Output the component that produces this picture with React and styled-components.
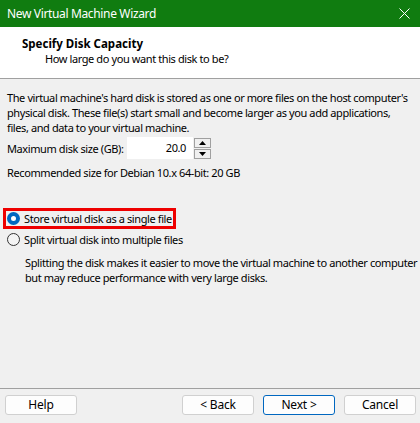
import React from 'react'
import styled, { createGlobalStyle } from 'styled-components'

const GlobalStyle = createGlobalStyle`
    body {
        margin: 0;
        font-family: "Noto Sans", "Liberation Sans", sans-serif;
        font-size: 11px;
        letter-spacing: -0.4px;
        color: #000;
    }
`

const Window = styled.div`
    display: flex;
    flex-direction: column;
    width: 420px;
    height: 423px;
    background: #f0f0f0;
    overflow: hidden;
`
const TitleBar = styled.div`
    display: flex;
    justify-content: space-between;
    align-items: center;
    height: 27px;
    padding: 0 10px 0 7px;
    background: #107c10;
    color: #fff;
    font-size: 12px;
    letter-spacing: -0.35px;
`
const Header = styled.div`
    display: flex;
    flex-direction: column;
    height: 52px;
    padding: 9px 0 0 22px;
    box-sizing: border-box;
    background: #fff;
    border-bottom: 1px solid #a0a0a0;
    line-height: 15px;
`
const HeaderTitle = styled.div`
    font-weight: 700;
    font-size: 11.5px;
    letter-spacing: 0;
`
const HeaderSub = styled.div`
    padding-left: 23px;
`
const Body = styled.div`
    flex: 1;
    display: flex;
    flex-direction: column;
    padding: 11px 7px 0 7px;
    line-height: 15px;
`
const Paragraph = styled.p`
    margin: 0;
    white-space: nowrap;
    padding-left: ${p => p.$indent || 0}px;
    margin-top: ${p => p.$top || 0}px;
`
const SizeRow = styled.div`
    display: flex;
    align-items: center;
    margin-top: 2px;
    height: 22px;
    white-space: nowrap;
`
const SizeLabel = styled.span`
    width: 120px;
`
const NumberBox = styled.div`
    width: 66px;
    height: 22px;
    box-sizing: border-box;
    background: #fff;
    text-align: right;
    padding-right: 7px;
    line-height: 22px;
`
const Spinner = styled.div`
    display: flex;
    flex-direction: column;
    gap: 1px;
    margin-left: 1px;
`
const SpinButton = styled.div`
    display: flex;
    align-items: center;
    justify-content: center;
    width: 15px;
    height: 8px;
    border: 1px solid #a0a0a0;
    background: #f0f0f0;
`
const Options = styled.div`
    display: flex;
    flex-direction: column;
    align-items: flex-start;
    margin-top: 28px;
`
const RadioRow = styled.label`
    display: flex;
    align-items: center;
    gap: 4px;
    height: 15px;
    padding: 0 1px 0 1px;
    margin-left: -4px;
    white-space: nowrap;
    border: 3px solid ${p => (p.$highlight ? '#ee0000' : 'transparent')};
`
const RadioDot = styled.span`
    width: 13px;
    height: 13px;
    box-sizing: border-box;
    border-radius: 50%;
    border: ${p => (p.$checked ? '4px solid #0067c0' : '1px solid #333')};
    background: ${p => (p.$checked ? '#fff' : '#f4f4f4')};
`
const Footer = styled.div`
    display: flex;
    align-items: center;
    height: 31px;
    padding: 0 4px 3px 5px;
    border-top: 1px solid #a0a0a0;
`
const Button = styled.div`
    display: flex;
    align-items: center;
    justify-content: center;
    width: 72px;
    height: 20px;
    box-sizing: border-box;
    margin-left: ${p => p.$gap || 0}px;
    background: #fdfdfd;
    border: 1px solid ${p => (p.$primary ? '#0067c0' : '#d0d0d0')};
    border-radius: 3px;
    font-size: 12px;
    letter-spacing: -0.2px;
`

const CloseIcon = () => (
    <svg width="11" height="11" viewBox="0 0 11 11">
        <path d="M0.5 0.5 L10.5 10.5 M10.5 0.5 L0.5 10.5" stroke="#fff" strokeWidth="1" />
    </svg>
)

const Arrow = ({ down }) => (
    <svg width="7" height="4" viewBox="0 0 7 4">
        <path d={down ? 'M0 0 H7 L3.5 4 Z' : 'M0 4 H7 L3.5 0 Z'} fill="#000" />
    </svg>
)

const App = () => {
    return (
        <Window>
            <GlobalStyle />
            <TitleBar>
                <span>New Virtual Machine Wizard</span>
                <CloseIcon />
            </TitleBar>
            <Header>
                <HeaderTitle>Specify Disk Capacity</HeaderTitle>
                <HeaderSub>How large do you want this disk to be?</HeaderSub>
            </Header>
            <Body>
                <Paragraph>
                    The virtual machine's hard disk is stored as one or more files on the host computer's<br />
                    physical disk. These file(s) start small and become larger as you add applications,<br />
                    files, and data to your virtual machine.
                </Paragraph>
                <SizeRow>
                    <SizeLabel>Maximum disk size (GB):</SizeLabel>
                    <NumberBox>20.0</NumberBox>
                    <Spinner>
                        <SpinButton><Arrow /></SpinButton>
                        <SpinButton><Arrow down /></SpinButton>
                    </Spinner>
                </SizeRow>
                <Paragraph $top={6}>Recommended size for Debian 10.x 64-bit: 20 GB</Paragraph>
                <Options>
                    <RadioRow $highlight>
                        <RadioDot $checked />
                        Store virtual disk as a single file
                    </RadioRow>
                    <RadioRow>
                        <RadioDot />
                        Split virtual disk into multiple files
                    </RadioRow>
                </Options>
                <Paragraph $indent={18} $top={5}>
                    Splitting the disk makes it easier to move the virtual machine to another computer<br />
                    but may reduce performance with very large disks.
                </Paragraph>
            </Body>
            <Footer>
                <Button>Help</Button>
                <Button $gap={105}>&lt; Back</Button>
                <Button $gap={9} $primary>Next &gt;</Button>
                <Button $gap={9}>Cancel</Button>
            </Footer>
        </Window>
    )
}

export default App
